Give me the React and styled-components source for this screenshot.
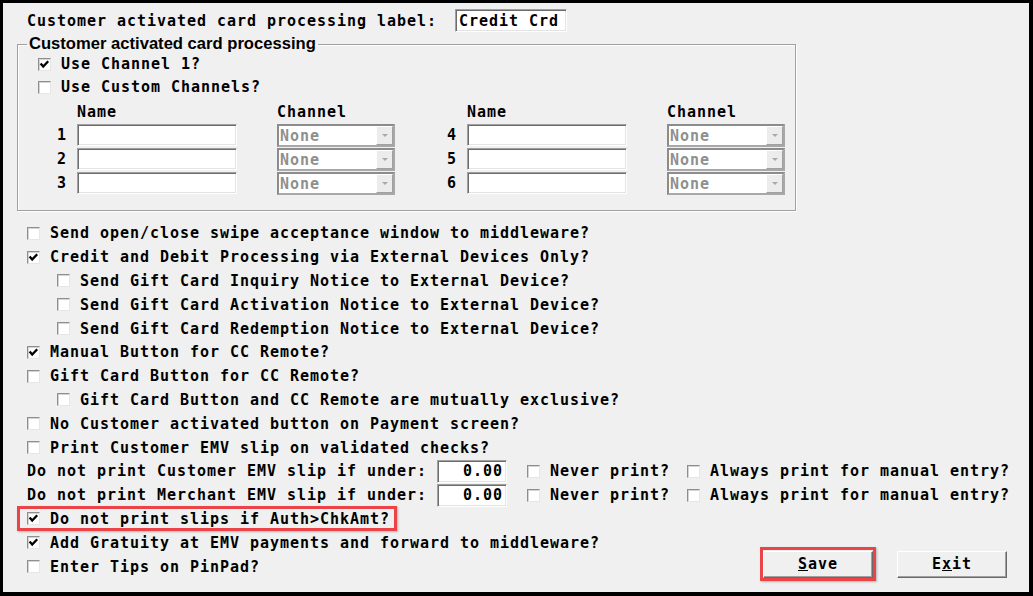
import React from 'react';
import styled, { createGlobalStyle } from 'styled-components';

const MONO = `"DejaVu Sans Mono", "Liberation Mono", monospace`;

const GlobalStyle = createGlobalStyle`
  html, body {
    margin: 0;
    padding: 0;
    background: #000;
  }
`;

const Frame = styled.div`
  box-sizing: border-box;
  width: 1033px;
  height: 596px;
  border-style: solid;
  border-color: #000;
  border-width: 3px 4px 4px 3px;
  background: #f0f0f0;
  padding-top: 6px;
  display: flex;
  flex-direction: column;
  font-family: ${MONO};
  font-weight: bold;
  font-size: 15px;
  letter-spacing: 0.97px;
  color: #000;
`;

const TopRow = styled.div`
  display: flex;
  align-items: center;
  height: 23px;
  padding-left: 24px;
  gap: 18px;
`;

const TextBox = styled.div`
  box-sizing: border-box;
  width: ${(p) => p.$width}px;
  height: ${(p) => p.$height || 23}px;
  background: #fff;
  border: 1px solid;
  border-color: #a0a0a0 #fff #fff #a0a0a0;
  box-shadow: inset 1px 1px 0 #6d6d6d, inset -1px -1px 0 #e3e3e3;
  display: flex;
  align-items: center;
  justify-content: ${(p) => (p.$right ? 'flex-end' : 'flex-start')};
  padding: 0 ${(p) => (p.$right ? 3 : 2)}px 0 3px;
  white-space: pre;
`;

const Group = styled.fieldset`
  box-sizing: border-box;
  width: 779px;
  margin: 4px 0 0 14px;
  padding: 0 0 16px 0;
  border: 1px solid #a0a0a0;
  box-shadow: inset 1px 1px 0 #fff, 1px 1px 0 #fff;
  min-width: 0;
`;

const Legend = styled.legend`
  margin-left: 9px;
  padding: 0 2px;
  font-family: "Liberation Sans", Arial, sans-serif;
  font-size: 16.6px;
  line-height: 16px;
  letter-spacing: 0;
  font-weight: bold;
`;

const GroupBody = styled.div`
  padding-left: 20px;
`;

const Row = styled.div`
  display: flex;
  align-items: center;
  height: ${(p) => p.$height || 23.8}px;
  padding-left: ${(p) => (p.$indent ? 30 : 0)}px;
  padding-top: 1px;
  box-sizing: border-box;
  white-space: pre;
`;

const Box = styled.span`
  box-sizing: border-box;
  flex: none;
  width: 13px;
  height: 13px;
  background: #fff;
  border: 1px solid;
  border-color: #8e8e8e #e6e6e6 #e6e6e6 #8e8e8e;
  box-shadow: inset 1px 1px 0 #d4d4d4;
  display: inline-flex;
  align-items: center;
  justify-content: center;
  margin-right: 10px;
`;

const Check = ({ checked }) => (
  <Box>
    {checked && (
      <svg width="11" height="11" viewBox="0 0 11 11">
        <path d="M1.6 4.6 L4.2 7.6 L9.2 2.2" fill="none" stroke="#000" strokeWidth="2.3" />
      </svg>
    )}
  </Box>
);

const ChannelGrid = styled.div`
  margin-left: 9px;
  display: grid;
  grid-template-columns: 30px 200px 160px 30px 200px 118px;
  grid-template-rows: 24px repeat(3, 22px);
  row-gap: 2px;
  align-items: center;
`;

const Head = styled.span`
  align-self: end;
  line-height: 20px;
`;

const Num = styled.div`
  text-align: right;
  padding-right: 10px;
`;

const Combo = styled.div`
  box-sizing: border-box;
  width: 118px;
  height: 23px;
  display: flex;
  background: #fff;
  border: 2px solid;
  border-color: #8c8c8c #a8a8a8 #a8a8a8 #8c8c8c;
  color: #8f8f8f;
`;

const ComboValue = styled.span`
  flex: 1;
  padding-left: 1px;
  line-height: 20px;
`;

const ComboArrow = styled.span`
  box-sizing: border-box;
  width: 17px;
  background: #ececec;
  border: 1px solid;
  border-color: #fff #a0a0a0 #a0a0a0 #fff;
  display: flex;
  align-items: center;
  justify-content: center;
  &::before {
    content: '';
    border-left: 3px solid transparent;
    border-right: 3px solid transparent;
    border-top: 3px solid #a8a8a8;
  }
`;

const Options = styled.div`
  margin-top: 10px;
  padding-left: 24px;
  display: flex;
  flex-direction: column;
`;

const Highlight = styled.div`
  position: relative;
  align-self: flex-start;
  &::after {
    content: '';
    position: absolute;
    inset: -1px -7px -1px -10px;
    border: 3px solid #ea4448;
    box-shadow: 1px 1px 2px rgba(0, 0, 0, 0.25);
    pointer-events: none;
  }
`;

const Spacer = styled.span`
  display: inline-block;
  width: ${(p) => p.$w}px;
`;

const BottomArea = styled.div`
  display: flex;
  align-items: flex-end;
`;

const Buttons = styled.div`
  margin-left: auto;
  margin-right: 22px;
  display: flex;
  gap: 24px;
`;

const Button = styled.div`
  position: relative;
  box-sizing: border-box;
  width: 110px;
  height: 27px;
  display: flex;
  align-items: center;
  justify-content: center;
  background: #f0f0f0;
  border: 1px solid;
  border-color: #fff #696969 #696969 #fff;
  box-shadow: inset -1px -1px 0 #a0a0a0;
  &::after {
    content: '';
    display: ${(p) => (p.$marked ? 'block' : 'none')};
    position: absolute;
    inset: -5px -4px -4px -4px;
    border: 3px solid #ea4448;
    box-shadow: 1px 1px 2px rgba(0, 0, 0, 0.25);
  }
`;

const channels = [
  [1, 4],
  [2, 5],
  [3, 6],
];

const options = [
  { label: 'Send open/close swipe acceptance window to middleware?' },
  { label: 'Credit and Debit Processing via External Devices Only?', checked: true },
  { label: 'Send Gift Card Inquiry Notice to External Device?', indent: true },
  { label: 'Send Gift Card Activation Notice to External Device?', indent: true },
  { label: 'Send Gift Card Redemption Notice to External Device?', indent: true },
  { label: 'Manual Button for CC Remote?', checked: true },
  { label: 'Gift Card Button for CC Remote?' },
  { label: 'Gift Card Button and CC Remote are mutually exclusive?', indent: true },
  { label: 'No Customer activated button on Payment screen?' },
  { label: 'Print Customer EMV slip on validated checks?' },
];

const thresholds = ['Customer', 'Merchant'];

function ThresholdRow({ who }) {
  return (
    <Row>
      <span>{`Do not print ${who} EMV slip if under:`}</span>
      <Spacer $w={10} />
      <TextBox $width={70} $right>0.00</TextBox>
      <Spacer $w={20} />
      <Check />
      <span>Never print?</span>
      <Spacer $w={17} />
      <Check />
      <span>Always print for manual entry?</span>
    </Row>
  );
}

export default function App() {
  return (
    <>
      <GlobalStyle />
      <Frame>
        <TopRow>
          <span>Customer activated card processing label:</span>
          <TextBox $width={112}>Credit Crd</TextBox>
        </TopRow>

        <Group>
          <Legend>Customer activated card processing</Legend>
          <GroupBody>
            <Row $height={23}>
              <Check checked />
              Use Channel 1?
            </Row>
            <Row $height={23}>
              <Check />
              Use Custom Channels?
            </Row>
            <ChannelGrid>
              <span />
              <Head>Name</Head>
              <Head>Channel</Head>
              <span />
              <Head>Name</Head>
              <Head>Channel</Head>
              {channels.map(([a, b]) => (
                <React.Fragment key={a}>
                  <Num>{a}</Num>
                  <TextBox $width={160} $height={22} />
                  <Combo>
                    <ComboValue>None</ComboValue>
                    <ComboArrow />
                  </Combo>
                  <Num>{b}</Num>
                  <TextBox $width={160} $height={22} />
                  <Combo>
                    <ComboValue>None</ComboValue>
                    <ComboArrow />
                  </Combo>
                </React.Fragment>
              ))}
            </ChannelGrid>
          </GroupBody>
        </Group>

        <Options>
          {options.map((o) => (
            <Row key={o.label} $indent={o.indent}>
              <Check checked={o.checked} />
              {o.label}
            </Row>
          ))}
          {thresholds.map((w) => (
            <ThresholdRow key={w} who={w} />
          ))}
          <Highlight>
            <Row>
              <Check checked />
              Do not print slips if Auth&gt;ChkAmt?
            </Row>
          </Highlight>
          <BottomArea>
            <div>
              <Row>
                <Check checked />
                Add Gratuity at EMV payments and forward to middleware?
              </Row>
              <Row>
                <Check />
                Enter Tips on PinPad?
              </Row>
            </div>
            <Buttons>
              <Button $marked>
                <span>
                  <u>S</u>ave
                </span>
              </Button>
              <Button>
                <span>
                  E<u>x</u>it
                </span>
              </Button>
            </Buttons>
          </BottomArea>
        </Options>
      </Frame>
    </>
  );
}
